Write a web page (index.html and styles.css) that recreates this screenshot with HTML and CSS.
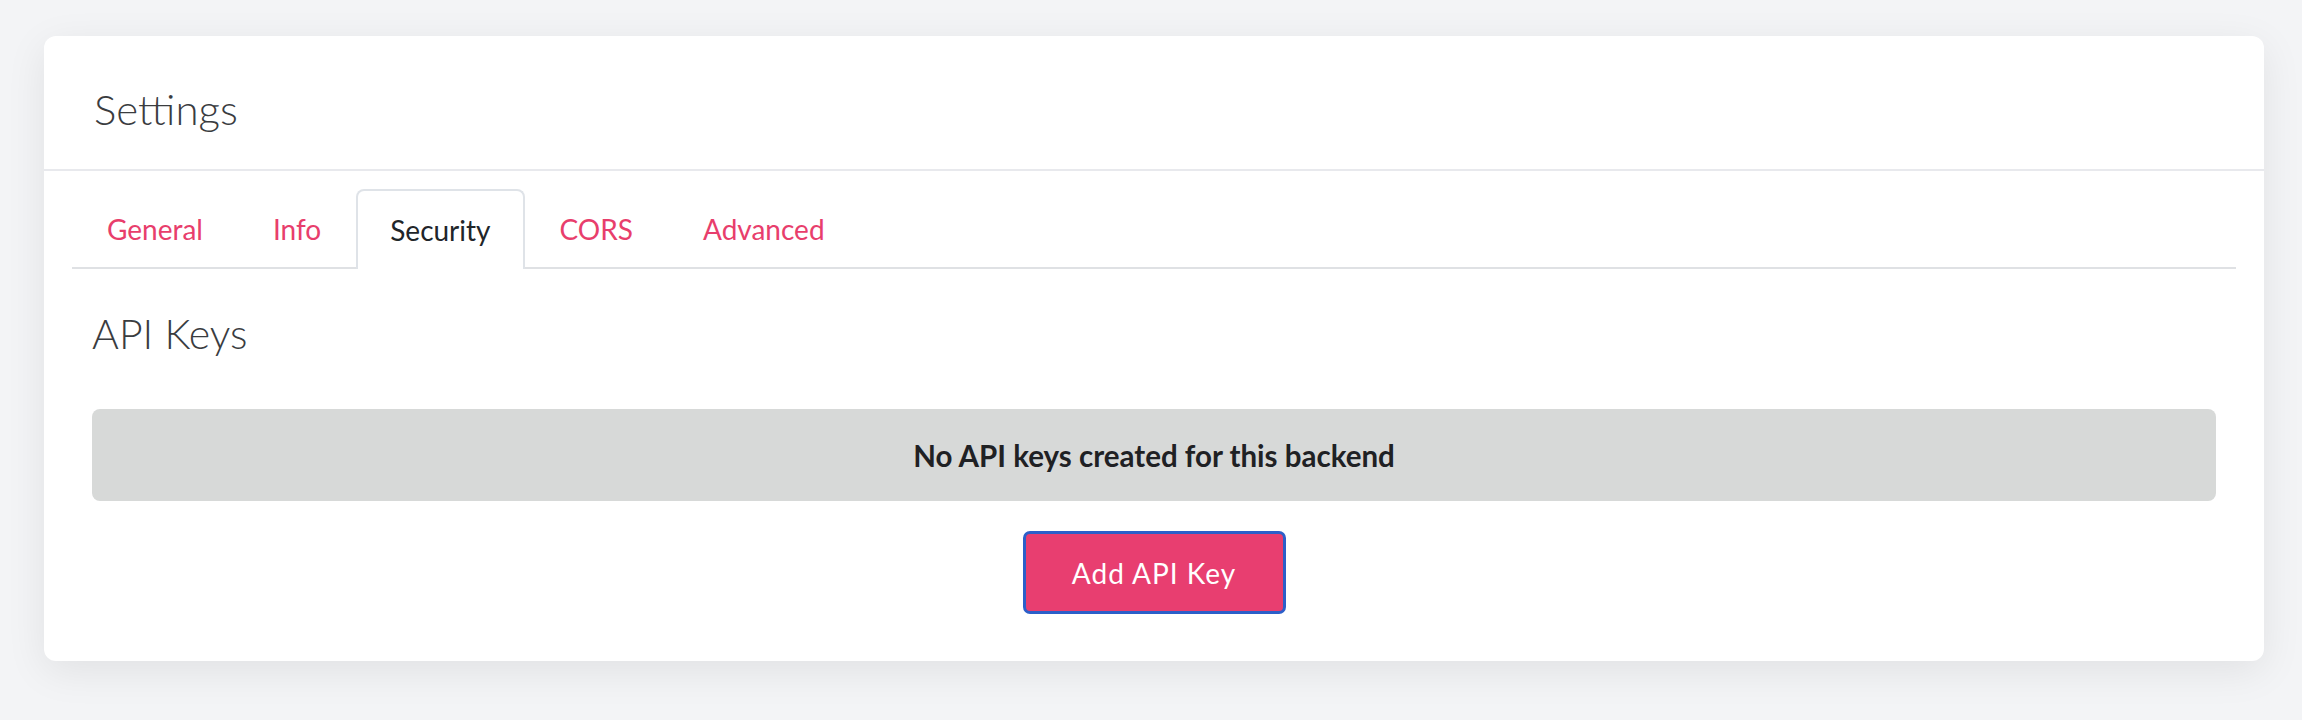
FILE: index.html
```html
<!DOCTYPE html>
<html lang="en">
<head>
<meta charset="utf-8">
<title>Settings</title>
<link rel="stylesheet" href="styles.css">
</head>
<body>
<div class="card">
  <div class="card-header">
    <h1 class="title">Settings</h1>
  </div>
  <ul class="tabs">
    <li class="tab">General</li>
    <li class="tab">Info</li>
    <li class="tab active">Security</li>
    <li class="tab">CORS</li>
    <li class="tab">Advanced</li>
  </ul>
  <div class="card-body">
    <h2 class="section-title">API Keys</h2>
    <div class="empty">No API keys created for this backend</div>
    <div class="actions">
      <button class="btn">Add API Key</button>
    </div>
  </div>
</div>
</body>
</html>
```
FILE: styles.css
```css
html, body {
  margin: 0;
  padding: 0;
}
body {
  background: #f3f4f6;
  font-family: Lato, "Noto Sans", sans-serif;
  color: #212529;
  padding: 36px 38px 0 44px;
  height: 720px;
  box-sizing: border-box;
}
.card {
  background: #ffffff;
  border-radius: 12px;
  box-shadow: 0 10px 40px rgba(0, 0, 0, 0.08);
  padding-bottom: 47px;
}
.card-header {
  height: 133px;
  border-bottom: 2px solid #e8e9ed;
  display: flex;
  align-items: center;
  padding-left: 50px;
}
.title {
  margin: 0;
  font-weight: 300;
  font-size: 42px;
  line-height: 50px;
  color: #3a3c3f;
  padding-top: 12px;
}
.tabs {
  list-style: none;
  margin: 18px 28px 0;
  padding: 0;
  display: flex;
  border-bottom: 2px solid #dfe1e4;
}
.tab {
  height: 76px;
  padding: 0 33px;
  display: flex;
  align-items: center;
  font-size: 28px;
  color: #e83e6c;
  border: 2px solid transparent;
  border-bottom: 0;
  border-radius: 8px 8px 0 0;
  margin-bottom: -2px;
}
.tab.active {
  color: #212529;
  border-color: #dfe3e8;
  background: #ffffff;
  padding: 0 32px;
  height: 78px;
}
.card-body {
  padding: 0 48px;
}
.section-title {
  margin: 0;
  font-weight: 300;
  font-size: 41px;
  line-height: 50px;
  color: #3a3c3f;
  padding-top: 40px;
}
.empty {
  margin-top: 50px;
  height: 92px;
  display: flex;
  align-items: center;
  justify-content: center;
  background: #d7d9d8;
  border-radius: 8px;
  font-weight: 700;
  font-size: 29.5px;
  color: #1f2124;
}
.actions {
  display: flex;
  justify-content: center;
  margin-top: 30px;
}
.btn {
  width: 263px;
  height: 83px;
  border: 3px solid #2c5fc9;
  border-radius: 7px;
  background: #e83e70;
  color: #ffffff;
  font-family: Lato, "Noto Sans", sans-serif;
  font-size: 28px;
  letter-spacing: 1px;
  padding: 0;
}
```
